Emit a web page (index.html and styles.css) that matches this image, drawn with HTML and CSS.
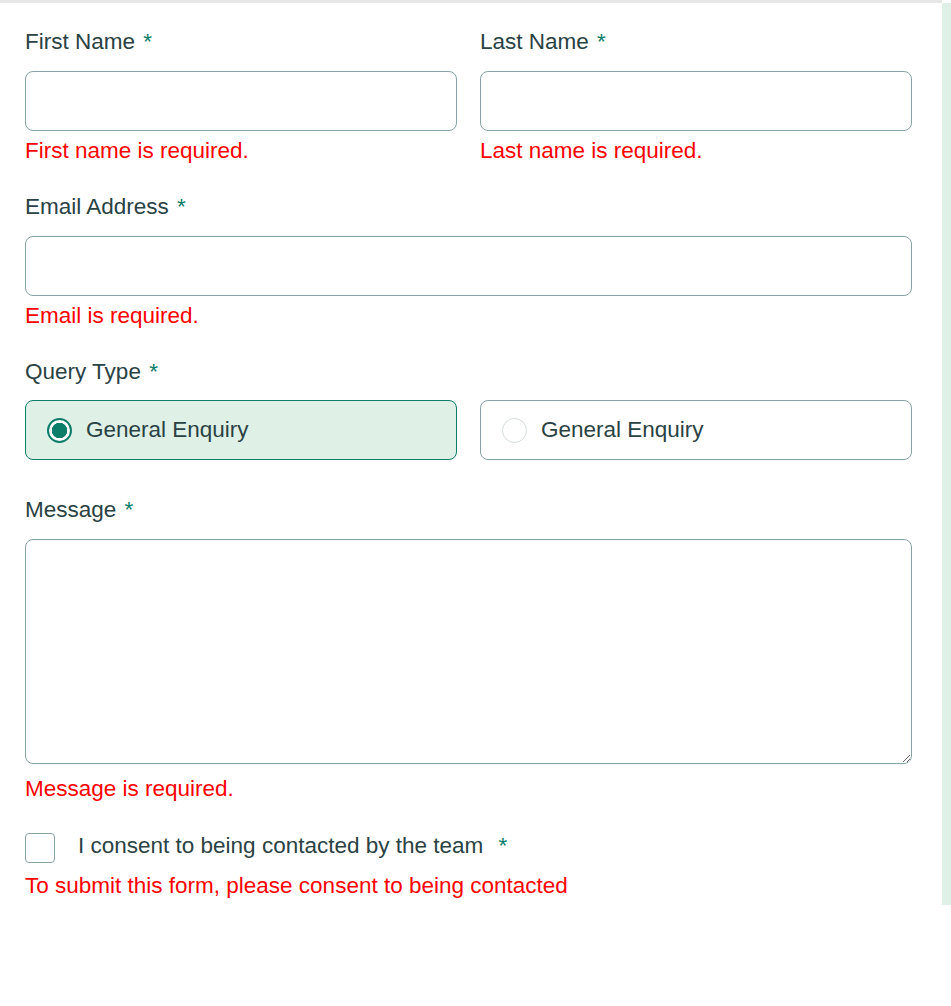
FILE: index.html
```html
<!DOCTYPE html>
<html lang="en">
<head>
<meta charset="utf-8">
<title>Contact form</title>
<link rel="stylesheet" href="styles.css">
</head>
<body>
<div class="page">
  <form class="form" novalidate>
    <div class="row">
      <div class="field">
        <label class="label" for="fn">First Name <span class="req">*</span></label>
        <input class="input" id="fn" type="text">
        <p class="error">First name is required.</p>
      </div>
      <div class="field">
        <label class="label" for="ln">Last Name <span class="req">*</span></label>
        <input class="input" id="ln" type="text">
        <p class="error">Last name is required.</p>
      </div>
    </div>
    <div class="field">
      <label class="label" for="em">Email Address <span class="req">*</span></label>
      <input class="input" id="em" type="email">
      <p class="error">Email is required.</p>
    </div>
    <div class="field field-query">
      <span class="label">Query Type <span class="req">*</span></span>
      <div class="row">
        <label class="option option-checked">
          <span class="radio radio-on"></span>
          <span>General Enquiry</span>
        </label>
        <label class="option">
          <span class="radio"></span>
          <span>General Enquiry</span>
        </label>
      </div>
    </div>
    <div class="field field-message">
      <label class="label" for="msg">Message <span class="req">*</span></label>
      <textarea class="textarea" id="msg"></textarea>
      <p class="error error-msg">Message is required.</p>
    </div>
    <div class="consent">
      <span class="checkbox"></span>
      <span class="consent-text">I consent to being contacted by the team <span class="req req-wide">*</span></span>
    </div>
    <p class="error">To submit this form, please consent to being contacted</p>
  </form>
  <div class="side"></div>
</div>
</body>
</html>
```

FILE: styles.css
```css
* { box-sizing: border-box; }

html, body {
  margin: 0;
  padding: 0;
  background: #ffffff;
}

body {
  font-family: "Liberation Sans", Arial, sans-serif;
  font-size: 22.5px;
  color: #2a4244;
}

.page {
  display: flex;
  align-items: flex-start;
}

.form {
  width: 942px;
  flex: none;
  border-top: 3px solid #e6e6e6;
  padding: 26px 30px 0 25px;
  display: flex;
  flex-direction: column;
}

.side {
  flex: 1;
  height: 902px;
  margin-top: 3px;
  background: #dff0e6;
}

.row {
  display: grid;
  grid-template-columns: 1fr 1fr;
  column-gap: 23px;
}

.field {
  display: flex;
  flex-direction: column;
}

.label {
  display: block;
  line-height: 26px;
  margin-bottom: 16px;
}

.req {
  color: #0c7d69;
  margin-left: 2px;
}

.req-wide {
  margin-left: 9px;
}

.input {
  display: block;
  width: 100%;
  height: 60px;
  border: 1px solid #87a3a6;
  border-radius: 8px;
  background: #ffffff;
  font: inherit;
  padding: 0 20px;
}

.error {
  margin: 7px 0 30px;
  color: #ff0000;
  line-height: 26px;
}

.field-query .label {
  margin-bottom: 15px;
}

.option {
  height: 60px;
  border: 1px solid #87a3a6;
  border-radius: 8px;
  display: flex;
  align-items: center;
  gap: 14px;
  padding-left: 21px;
  background: #ffffff;
}

.option-checked {
  background: #dff0e6;
  border-color: #0c7d69;
}

.radio {
  width: 25px;
  height: 25px;
  border-radius: 50%;
  border: 1px solid #d5dcdc;
  background: #ffffff;
  flex: none;
}

.radio-on {
  border: 2px solid #0c7d69;
  background: radial-gradient(circle, #0c7d69 0 7.5px, #ffffff 8px);
}

.field-message {
  margin-top: 37px;
}

.textarea {
  display: block;
  width: 100%;
  height: 225px;
  border: 1px solid #87a3a6;
  border-radius: 8px;
  font: inherit;
  resize: vertical;
  margin: 0;
}

.error-msg {
  margin-top: 12px;
  margin-bottom: 31px;
}

.consent {
  display: flex;
  align-items: flex-start;
  gap: 23px;
  height: 30px;
}

.checkbox {
  width: 30px;
  height: 30px;
  border: 1px solid #87a3a6;
  border-radius: 4px;
  flex: none;
}

.consent-text {
  line-height: 26px;
}

.consent + .error {
  margin-top: 10px;
}
```
